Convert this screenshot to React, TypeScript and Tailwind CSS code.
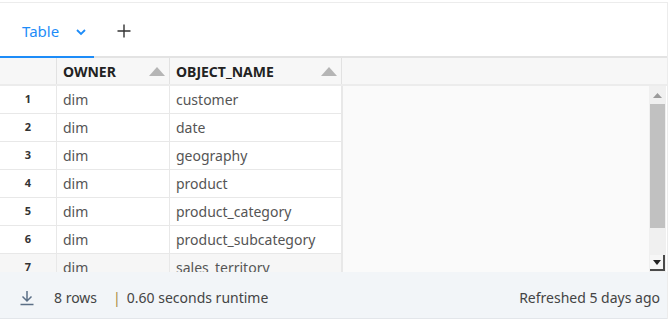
import React from "react";

const rows = [
  { owner: "dim", name: "customer" },
  { owner: "dim", name: "date" },
  { owner: "dim", name: "geography" },
  { owner: "dim", name: "product" },
  { owner: "dim", name: "product_category" },
  { owner: "dim", name: "product_subcategory" },
  { owner: "dim", name: "sales_territory" },
];

const SortArrow = () => (
  <svg width="16" height="9" viewBox="0 0 16 9" className="fill-[#b5b5b5]">
    <path d="M8 0 L16 9 L0 9 Z" />
  </svg>
);

export default function App() {
  return (
    <div
      className="w-[671px] h-[322px] bg-white overflow-hidden"
      style={{ fontFamily: '"Noto Sans", "Open Sans", sans-serif' }}
    >
      <div className="mt-[2px] mr-[3px] h-[317px] border-t border-r border-[#ececec] flex flex-col">
        {/* tabs */}
        <div className="h-[55px] flex items-end border-b-2 border-[#e3e3e3] relative">
          <div className="w-[94px] h-[55px] flex items-center pl-[22px] gap-[16px] border-b-2 border-[#1d8cf8] -mb-[2px]">
            <span className="text-[15px] text-[#1d8cf8] pt-[3px]">Table</span>
            <svg width="12" height="8" viewBox="0 0 12 8" className="mt-[4px]">
              <path d="M2 2 L6 6 L10 2" stroke="#1d8cf8" strokeWidth="1.8" fill="none" />
            </svg>
          </div>
          <div className="h-[55px] flex items-center pl-[23px]">
            <svg width="14" height="14" viewBox="0 0 14 14" className="mt-[4px]">
              <path d="M7 0.5 V13.5 M0.5 7 H13.5" stroke="#333" strokeWidth="1.4" fill="none" />
            </svg>
          </div>
        </div>

        {/* table */}
        <div className="flex-1 flex flex-col min-h-0 text-[14px]">
          <div className="h-[28px] flex bg-[#f7f7f7] border-b-2 border-[#ececec] pr-[3px]">
            <div className="w-[57px] border-r border-[#e2e2e2]" />
            <div className="w-[113px] flex items-center justify-between pl-[6px] pr-[4px] border-r border-[#e2e2e2] font-bold text-[#222]">
              <span>OWNER</span>
              <SortArrow />
            </div>
            <div className="w-[172px] flex items-center justify-between pl-[6px] pr-[4px] border-r border-[#e2e2e2] font-bold text-[#222]">
              <span>OBJECT_NAME</span>
              <SortArrow />
            </div>
            <div className="flex-1" />
          </div>
          <div className="flex-1 flex min-h-0 overflow-hidden">
            <div className="w-[342px] flex flex-col">
              {rows.map((r, i) => (
                <div
                  key={i}
                  className={`h-[28px] shrink-0 flex border-b border-[#e8e8e8] text-[#555] ${
                    i === 6 ? "bg-[#f6f6f6]" : "bg-white"
                  }`}
                >
                  <div className="w-[57px] flex items-center justify-center border-r border-[#e8e8e8] text-[11px] font-bold text-[#333]">
                    {i + 1}
                  </div>
                  <div className="w-[113px] flex items-center pl-[6px] border-r border-[#e8e8e8]">
                    {r.owner}
                  </div>
                  <div className="w-[172px] flex items-center pl-[6px] border-r border-[#e8e8e8]">
                    {r.name}
                  </div>
                </div>
              ))}
            </div>
            <div className="flex-1 bg-[#fafafa] border-l border-[#e8e8e8]" />
            <div className="w-[17px] bg-[#f0f0f0] flex flex-col items-center mr-[1px]">
              <div className="h-[18px] flex items-center justify-center">
                <svg width="9" height="5" viewBox="0 0 9 5" className="fill-[#9a9a9a]">
                  <path d="M4.5 0 L9 5 L0 5 Z" />
                </svg>
              </div>
              <div className="w-[15px] h-[124px] bg-[#c1c1c1]" />
              <div className="flex-1" />
              <div className="w-[15px] h-[16px] mb-[1px] border-r-2 border-b-2 border-[#4a4a4a] bg-[#f6f6f6] flex items-center justify-center">
                <svg width="8" height="5" viewBox="0 0 8 5" className="fill-[#222]">
                  <path d="M0 0 L8 0 L4 5 Z" />
                </svg>
              </div>
            </div>
          </div>
        </div>

        {/* footer */}
        <div className="h-[47px] bg-[#f2f5f8] border-b border-[#e3e6ea] flex items-center pt-[5px] px-[19px] text-[14px] text-[#444]">
          <svg width="16" height="16" viewBox="0 0 16 16" className="mr-[19px]">
            <path d="M8 1 V11 M3.5 6.5 L8 11 L12.5 6.5" stroke="#5b6f86" strokeWidth="1.5" fill="none" />
            <path d="M1.5 14.5 H14.5" stroke="#5b6f86" strokeWidth="1.5" />
          </svg>
          <span>8 rows</span>
          <span className="ml-[16px] text-[#a7873e]">|</span>
          <span className="ml-[6px]">0.60 seconds runtime</span>
          <span className="ml-auto mr-[-12px]">Refreshed 5 days ago</span>
        </div>
      </div>
    </div>
  );
}
